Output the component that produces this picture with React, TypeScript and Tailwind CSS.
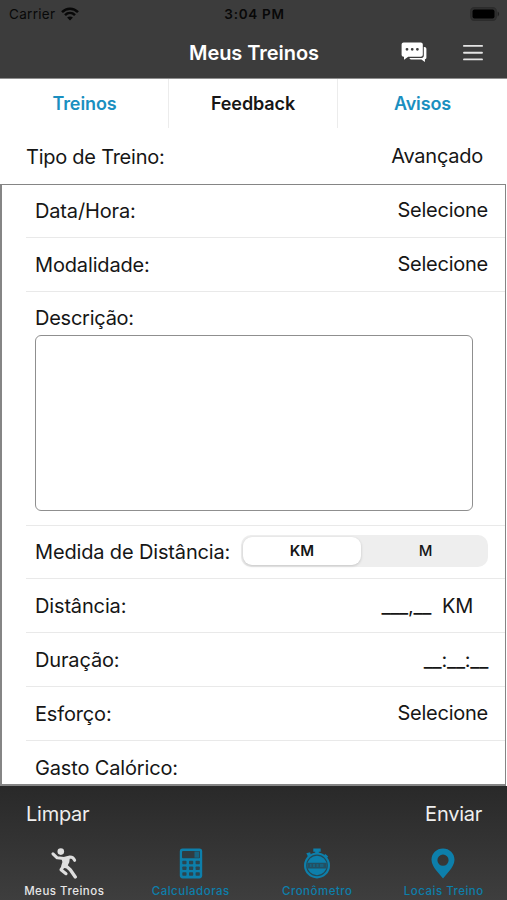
import type { ReactNode } from 'react'

interface RowProps {
  label: string
  children?: ReactNode
  last?: boolean
}

function Row({ label, children, last }: RowProps) {
  return (
    <div className={`flex shrink-0 h-[53.8px] items-center justify-between pl-[9px] pr-[17px] ${last ? '' : 'border-b border-[#e9e9e9]'}`}>
      <span className="pt-px tracking-[-0.15px]">{label}</span>
      {children}
    </div>
  )
}

function WifiIcon() {
  return (
    <svg width="18" height="14" viewBox="0 0 18 14" fill="none" stroke="#080808" strokeWidth="2.5">
      <path d="M1 5.2C5.5 .6 12.5 .6 17 5.2" />
      <path d="M4 8.2c2.9-2.8 7.1-2.8 10 0" />
      <path d="M9 13.6 6.1 10.6c1.7-1.5 4.1-1.5 5.8 0z" fill="#080808" stroke="none" />
    </svg>
  )
}

function BatteryIcon() {
  return (
    <svg width="30" height="14" viewBox="0 0 30 14">
      <rect x=".7" y=".7" width="25.6" height="12.6" rx="3.6" fill="#303030" stroke="#2c2c2c" strokeWidth="1.2" />
      <rect x="2.5" y="2.5" width="22" height="9" rx="2" fill="#000" />
      <path d="M27.6 4.6c2 .7 2 4.1 0 4.8z" fill="#202020" />
    </svg>
  )
}

function ChatIcon() {
  return (
    <svg width="26" height="21" viewBox="0 0 26 21" fill="#fff">
      <path d="M22.8 5h.6c1.2 0 2 .8 2 2v8.5c0 .9-.6 1.7-1.5 1.8v2.6l-3.5-2.5H10.5c-1 0-1.9-.6-2.2-1.5h12.4c1.2 0 2.1-.9 2.1-2.1z" />
      <path fillRule="evenodd" d="M2.6.5h17.2c1.1 0 2 .9 2 2v10.2c0 1.1-.9 2-2 2H7.2L3 17.8v-3.1h-.4c-1.1 0-2-.9-2-2V2.5c0-1.1.9-2 2-2zM6 5.9a1.4 1.4 0 1 0 0 2.8 1.4 1.4 0 0 0 0-2.8zm5.2 0a1.4 1.4 0 1 0 0 2.8 1.4 1.4 0 0 0 0-2.8zm5.2 0a1.4 1.4 0 1 0 0 2.8 1.4 1.4 0 0 0 0-2.8z" />
    </svg>
  )
}

function MenuIcon() {
  return (
    <svg width="20" height="16" viewBox="0 0 20 16" stroke="#e4e4e4" strokeWidth="1.9" strokeLinecap="round">
      <path d="M1 .9h18M1 7.7h18M1 14.4h18" />
    </svg>
  )
}

function RunnerIcon() {
  return (
    <svg width="28" height="31" viewBox="0 0 28 31" fill="none" stroke="#dedede" strokeLinecap="round" strokeLinejoin="round">
      <circle cx="10.8" cy="3.6" r="3.3" fill="#dedede" stroke="none" />
      <path d="M3 5.8l4.2 4 6.8.7 6-1.5c2.200 0 3.800 1.200 4.600 3.300" strokeWidth="3.1" />
      <path d="M12.800 10.500l5.700-.5-.5 4-2.500 5-3-1 1.200-4z" fill="#dedede" strokeWidth="2.600" />
      <path d="M15.500 17.500l4.800 4.300 5 7.200" strokeWidth="3.300" />
      <path d="M14 17.500l-3 4.200 5 4" strokeWidth="3.100" />
    </svg>
  )
}

function CalculatorIcon() {
  return (
    <svg width="24" height="31" viewBox="0 0 24 31">
      <rect x=".8" y=".6" width="22.4" height="29.8" rx="2.8" fill="#0d7fab" />
      <rect x="3" y="3" width="18" height="7.2" rx="1" fill="#303c42" />
      <rect x="15.5" y="3.5" width="4.8" height="6.2" fill="#176482" />
      <g fill="#2b4550">
        <rect x="3.3" y="12.7" width="4.2" height="3.5" rx=".7" />
        <rect x="10" y="12.7" width="4.2" height="3.5" rx=".7" />
        <rect x="16.6" y="12.7" width="4.2" height="3.5" rx=".7" />
        <rect x="3.3" y="18.5" width="4.2" height="3.5" rx=".7" />
        <rect x="10" y="18.5" width="4.2" height="3.5" rx=".7" />
        <rect x="16.6" y="18.5" width="4.2" height="3.5" rx=".7" />
        <rect x="3.3" y="24.3" width="4.2" height="3.5" rx=".7" />
        <rect x="10" y="24.3" width="4.2" height="3.5" rx=".7" />
        <rect x="16.6" y="24.3" width="4.2" height="3.5" rx=".7" />
      </g>
    </svg>
  )
}

function StopwatchIcon() {
  return (
    <svg width="28" height="31" viewBox="0 0 28 31" className="-ml-px">
      <path d="M10.3.5h7.4v3.2h-1.9v2.5h-3.6V3.7h-1.9z" fill="#0d7fab" />
      <path d="M3.3 5.3l3.8-1 .8 2.4-2.8 2zM22.3 6l2.9 2.5-1.4 1.6-2.9-2.5z" fill="#0d7fab" />
      <circle cx="14" cy="17.4" r="13" fill="#0d7fab" />
      <circle cx="14" cy="17.4" r="10.3" fill="none" stroke="#254854" strokeWidth="1.1" />
      <rect x="4.4" y="14.8" width="19.2" height="5.6" rx="1" fill="#235063" />
      <path d="M7 17.6h1.5M10 17.6h2M13.5 17.6h2M17 17.6h3.5" stroke="#17627f" strokeWidth="3" />
    </svg>
  )
}

function PinIcon() {
  return (
    <svg width="24" height="31" viewBox="0 0 24 31" className="-ml-[2px]">
      <path fillRule="evenodd" d="M12 .6c6.5 0 11.5 4.9 11.5 11.2 0 4.2-2.5 7.7-4.8 10.8L12 30.5 5.3 22.6C3 19.5.5 16 .5 11.8.5 5.5 5.5.6 12 .6zm0 6a5.6 5.6 0 1 0 0 11.2A5.6 5.6 0 0 0 12 6.6z" fill="#0d7fab" />
    </svg>
  )
}

const tabs = [
  { label: 'Meus Treinos', icon: <RunnerIcon />, color: 'text-[#e6e6e6]' },
  { label: 'Calculadoras', icon: <CalculatorIcon />, color: 'text-[#0d7fab]' },
  { label: 'Cronômetro', icon: <StopwatchIcon />, color: 'text-[#0d7fab]' },
  { label: 'Locais Treino', icon: <PinIcon />, color: 'text-[#0d7fab]' },
]

export default function App() {
  return (
    <div className="flex h-[900px] w-[507px] flex-col overflow-hidden bg-white font-['Inter','Liberation_Sans',sans-serif] text-[20px] leading-6 tracking-[-0.25px] text-[#161616]">
      <header className="h-[79px] shrink-0 border-b border-[#8e8e8e] bg-[#3c3c3c]">
        <div className="grid h-[27px] grid-cols-3 items-center pl-[9px] pr-[7px] text-[13.5px] tracking-[0.3px] text-[#080808]">
          <div className="flex items-center gap-[6px]">
            <span>Carrier</span>
            <WifiIcon />
          </div>
          <span className="text-center font-semibold tracking-[0.7px]">3:04 PM</span>
          <div className="flex justify-end">
            <BatteryIcon />
          </div>
        </div>
        <div className="grid h-[51px] grid-cols-[1fr_auto_1fr] items-center pr-[24px]">
          <span />
          <h1 className="pl-[25px] text-[20px] font-semibold tracking-[-0.05px] text-white">Meus Treinos</h1>
          <div className="flex items-center justify-end gap-[36px]">
            <ChatIcon />
            <MenuIcon />
          </div>
        </div>
      </header>

      <nav className="grid h-[49px] shrink-0 grid-cols-3 divide-x divide-[#ececec] text-center text-[18px] font-semibold leading-[49px] tracking-[-0.12px] text-[#1a8fc0]">
        <span className="pl-px">Treinos</span>
        <span className="text-[#161616]">Feedback</span>
        <span>Avisos</span>
      </nav>

      <div className="flex h-[56px] shrink-0 items-center justify-between pl-[26px] pr-[24px]">
        <span className="pt-px">Tipo de Treino:</span>
        <span>Avançado</span>
      </div>

      <main className="mr-px flex h-[602px] shrink-0 flex-col overflow-hidden border-2 border-t border-r border-[#858585] pl-[24px]">
        <div className="-mt-px shrink-0">
          <Row label="Data/Hora:">
            <span>Selecione</span>
          </Row>
        </div>
        <Row label="Modalidade:">
          <span>Selecione</span>
        </Row>
        <div className="h-[234px] shrink-0 border-b border-[#e9e9e9] pl-[9px] pr-[32px] pt-[14px]">
          <div>Descrição:</div>
          <textarea className="mt-[5px] block h-[176px] w-full resize-none rounded-[6px] border-[1.5px] border-[#8f8f8f] outline-none" />
        </div>
        <Row label="Medida de Distância:">
          <div className="mb-[2px] flex h-[32px] w-[247px] rounded-[10px] bg-[#eeeeee] p-[2px] text-center text-[15px] font-medium leading-[28px] tracking-[0px]">
            <span className="w-[118px] rounded-[9px] bg-white font-semibold shadow-[0_1px_3px_rgba(0,0,0,0.18)]">KM</span>
            <span className="flex-1 pl-[4px]">M</span>
          </div>
        </Row>
        <Row label="Distância:">
          <span className="whitespace-pre pr-[15px]">___,__  KM</span>
        </Row>
        <Row label="Duração:">
          <span>__:__:__</span>
        </Row>
        <Row label="Esforço:">
          <span>Selecione</span>
        </Row>
        <Row label="Gasto Calórico:" last />
      </main>

      <footer className="flex h-[114px] shrink-0 flex-col bg-gradient-to-b from-[#292929] to-[#3e3e3e] text-[#eeeeee]">
        <div className="flex h-[56px] items-center justify-between pl-[26px] pr-[25px]">
          <span>Limpar</span>
          <span>Enviar</span>
        </div>
        <div className="grid grid-cols-4 pl-px pt-[6px]">
          {tabs.map((tab) => (
            <div key={tab.label} className={`flex flex-col items-center text-[11.5px] font-medium leading-[14px] tracking-[0.5px] ${tab.color}`}>
              {tab.icon}
              <span className="mt-[5px]">{tab.label}</span>
            </div>
          ))}
        </div>
      </footer>
    </div>
  )
}
